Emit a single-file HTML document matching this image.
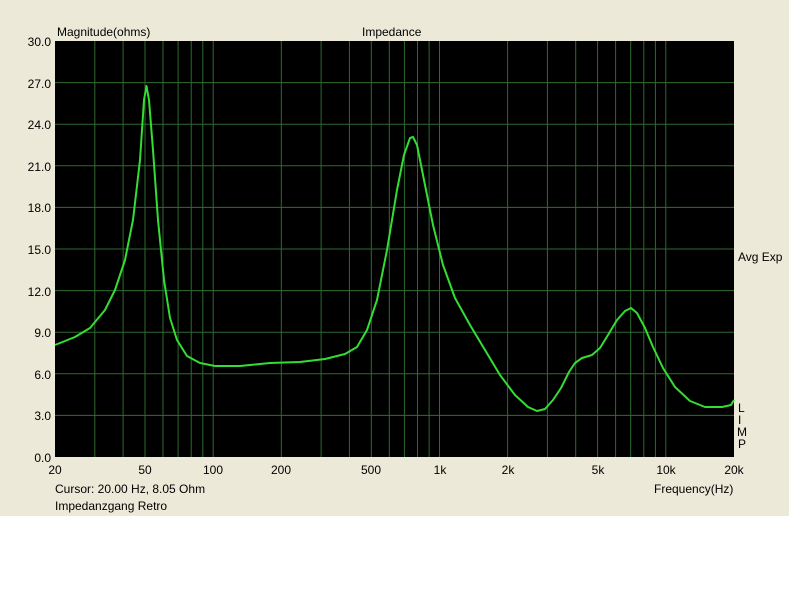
<!DOCTYPE html>
<html><head><style>
body{margin:0;width:800px;height:600px;background:#fff;font-family:"Liberation Sans",sans-serif;overflow:hidden}
#bg{position:absolute;left:0;top:0;width:789px;height:516px;background:#ECE9D8}
svg{position:absolute;left:0;top:0}
text{font-family:"Liberation Sans",sans-serif;font-size:12px;fill:#000}
</style></head><body>
<div id="bg"></div>
<svg width="800" height="600">
<rect x="55" y="41" width="679" height="416" fill="#000"/>
<g stroke="#2e6b2e" stroke-width="1">
<line x1="55" y1="82.6" x2="734" y2="82.6"/><line x1="55" y1="124.2" x2="734" y2="124.2"/>
<line x1="55" y1="165.8" x2="734" y2="165.8"/><line x1="55" y1="207.4" x2="734" y2="207.4"/>
<line x1="55" y1="249" x2="734" y2="249"/><line x1="55" y1="290.6" x2="734" y2="290.6"/>
<line x1="55" y1="332.2" x2="734" y2="332.2"/><line x1="55" y1="373.8" x2="734" y2="373.8"/>
<line x1="55" y1="415.4" x2="734" y2="415.4"/>
<line x1="94.8" y1="41" x2="94.8" y2="457"/><line x1="123.1" y1="41" x2="123.1" y2="457"/>
<line x1="145" y1="41" x2="145" y2="457"/><line x1="163" y1="41" x2="163" y2="457"/>
<line x1="178.1" y1="41" x2="178.1" y2="457"/><line x1="191.2" y1="41" x2="191.2" y2="457"/>
<line x1="202.8" y1="41" x2="202.8" y2="457"/><line x1="213.2" y1="41" x2="213.2" y2="457"/>
<line x1="281.3" y1="41" x2="281.3" y2="457"/><line x1="321.1" y1="41" x2="321.1" y2="457"/>
<line x1="349.4" y1="41" x2="349.4" y2="457"/><line x1="371.3" y1="41" x2="371.3" y2="457"/>
<line x1="389.3" y1="41" x2="389.3" y2="457"/><line x1="404.4" y1="41" x2="404.4" y2="457"/>
<line x1="417.5" y1="41" x2="417.5" y2="457"/><line x1="429.1" y1="41" x2="429.1" y2="457"/>
<line x1="439.5" y1="41" x2="439.5" y2="457"/>
<line x1="507.6" y1="41" x2="507.6" y2="457"/><line x1="547.4" y1="41" x2="547.4" y2="457"/>
<line x1="575.7" y1="41" x2="575.7" y2="457"/><line x1="597.6" y1="41" x2="597.6" y2="457"/>
<line x1="615.6" y1="41" x2="615.6" y2="457"/><line x1="630.7" y1="41" x2="630.7" y2="457"/>
<line x1="643.8" y1="41" x2="643.8" y2="457"/><line x1="655.4" y1="41" x2="655.4" y2="457"/>
<line x1="665.8" y1="41" x2="665.8" y2="457"/>
</g>
<path fill="none" stroke="#33dd33" stroke-width="2" stroke-linejoin="round" d="M55,345 L75,337 L90,328 L105,310 L115,290 L125,260 L133,220 L140,160 L144,100 L146.5,86 L149,100 L153,150 L158,220 L164,280 L170,318 L177,340 L187,356 L200,363 L215,366 L240,366 L270,363 L300,362 L325,359 L345,354 L357,347 L367,330 L377,300 L387,250 L397,190 L404,155 L410,138 L413,137 L417,145 L424,180 L433,225 L443,265 L455,298 L470,325 L485,350 L500,375 L515,395 L528,407 L537,411 L545,409 L553,400 L561,388 L569,372 L575,363 L582,358 L592,355 L600,348 L608,335 L617,320 L625,311 L631,308 L637,313 L645,328 L653,347 L663,368 L675,387 L690,401 L705,407 L722,407 L731,405 L734,400"/>
<g text-anchor="end">
<text x="51" y="46">30.0</text><text x="51" y="88">27.0</text><text x="51" y="129">24.0</text>
<text x="51" y="171">21.0</text><text x="51" y="212">18.0</text><text x="51" y="254">15.0</text>
<text x="51" y="296">12.0</text><text x="51" y="337">9.0</text><text x="51" y="379">6.0</text>
<text x="51" y="420">3.0</text><text x="51" y="462">0.0</text>
</g>
<text x="57" y="36">Magnitude(ohms)</text>
<text x="362" y="36">Impedance</text>
<text x="738" y="261">Avg Exp</text>
<text x="738" y="412">L</text><text x="738" y="424">I</text><text x="737" y="436">M</text><text x="738" y="448">P</text>
<g text-anchor="middle">
<text x="55" y="474">20</text><text x="145" y="474">50</text><text x="213" y="474">100</text>
<text x="281" y="474">200</text><text x="371" y="474">500</text><text x="440" y="474">1k</text>
<text x="508" y="474">2k</text><text x="598" y="474">5k</text><text x="666" y="474">10k</text>
<text x="734" y="474">20k</text>
</g>
<text x="55" y="493">Cursor: 20.00 Hz, 8.05 Ohm</text>
<text x="55" y="510">Impedanzgang Retro</text>
<text x="654" y="493">Frequency(Hz)</text>
</svg>
</body></html>
